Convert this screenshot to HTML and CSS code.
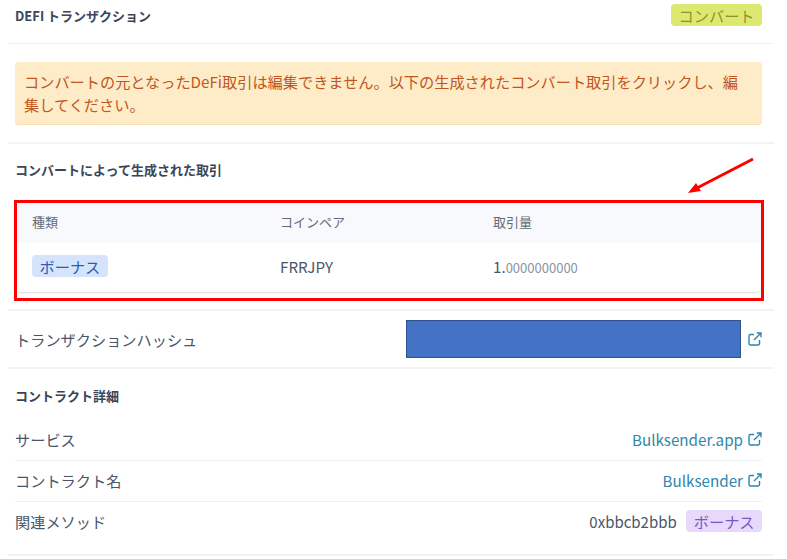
FILE: index.html
```html
<!DOCTYPE html>
<html lang="ja">
<head>
<meta charset="utf-8">
<title>DEFI トランザクション</title>
<link rel="stylesheet" href="styles.css">
</head>
<body>
<main class="panel">
  <header class="head">
    <h2 class="title">DEFI トランザクション</h2>
    <span class="badge badge-lime">コンバート</span>
  </header>
  <section class="alert-wrap">
    <p class="alert">コンバートの元となったDeFi取引は編集できません。以下の生成されたコンバート取引をクリックし、編集してください。</p>
  </section>
  <section class="generated">
    <h3 class="title sub">コンバートによって生成された取引</h3>
    <div class="table">
      <div class="tr th">
        <span>種類</span><span>コインペア</span><span>取引量</span>
      </div>
      <div class="tr td">
        <span><span class="badge badge-blue">ボーナス</span></span>
        <span>FRRJPY</span>
        <span>1.<small class="dec">0000000000</small></span>
      </div>
    </div>
  </section>
  <section class="hash">
    <span class="label">トランザクションハッシュ</span>
    <div class="hash-val">
      <div class="mask"></div>
      <a class="link"><svg class="ext" viewBox="0 0 14 14"><path d="M11.5 8v3.6a1.4 1.4 0 0 1-1.4 1.4H2.4A1.4 1.4 0 0 1 1 11.6V3.9a1.4 1.4 0 0 1 1.4-1.4H6M8.8 1H13v4.2M13 1 6 8"/></svg></a>
    </div>
  </section>
  <section class="contract">
    <h3 class="title sub2">コントラクト詳細</h3>
    <div class="row">
      <span class="label">サービス</span>
      <a class="link">Bulksender.app<svg class="ext" viewBox="0 0 14 14"><path d="M11.5 8v3.6a1.4 1.4 0 0 1-1.4 1.4H2.4A1.4 1.4 0 0 1 1 11.6V3.9a1.4 1.4 0 0 1 1.4-1.4H6M8.8 1H13v4.2M13 1 6 8"/></svg></a>
    </div>
    <div class="row">
      <span class="label">コントラクト名</span>
      <a class="link">Bulksender<svg class="ext" viewBox="0 0 14 14"><path d="M11.5 8v3.6a1.4 1.4 0 0 1-1.4 1.4H2.4A1.4 1.4 0 0 1 1 11.6V3.9a1.4 1.4 0 0 1 1.4-1.4H6M8.8 1H13v4.2M13 1 6 8"/></svg></a>
    </div>
    <div class="row last">
      <span class="label">関連メソッド</span>
      <span class="method">0xbbcb2bbb<span class="badge badge-purple">ボーナス</span></span>
    </div>
  </section>
</main>
<div class="red-box"></div>
<svg class="arrow" viewBox="0 0 70 40"><path class="arrow-line" d="M66 3 10 32"/><path class="arrow-head" d="M1 37 9 27 14 35Z"/></svg>
</body>
</html>
```
FILE: styles.css
```css
* { box-sizing: border-box; }
html, body { margin: 0; padding: 0; background: #fff; }
body {
  width: 787px;
  height: 559px;
  overflow: hidden;
  position: relative;
  font-family: "Noto Sans CJK JP", "Noto Sans", sans-serif;
  color: #4a5568;
}
.panel { margin-left: 8px; width: 766px; }
.head {
  height: 44px;
  padding: 4px 12px 0 7px;
  border-bottom: 1px solid #edf2f7;
  display: flex;
  justify-content: space-between;
  align-items: flex-start;
}
.title {
  margin: 0;
  font-size: 13px;
  line-height: 24px;
  font-weight: 700;
  color: #3a4658;
}
.badge {
  display: inline-block;
  height: 22px;
  padding: 0 7.5px;
  border-radius: 4px;
  font-size: 15.2px;
  line-height: 22px;
}
.badge-lime { background: #dde871; color: #8f932a; }
.badge-blue { background: #d5e3fb; color: #2b5cb8; }
.badge-purple { background: #e6d9fb; color: #7c55c7; }
.alert-wrap {
  height: 100px;
  padding: 18px 12px 0 7px;
  border-bottom: 2px solid #f1f3f6;
}
.alert {
  margin: 0;
  height: 63px;
  padding: 8px 9px 0 9px;
  background: #feebc8;
  border-bottom: 1px solid #f6dcae;
  border-radius: 4px;
  color: #c05621;
  font-size: 15.2px;
  line-height: 22.8px;
}
.generated {
  height: 167px;
  padding: 14px 12px 0 7px;
  border-bottom: 2px solid #f1f3f6;
}
.table {
  margin-top: 21px;
  border-radius: 0 0 6px 6px;
  box-shadow: 0 1px 2px rgba(0, 0, 0, .14);
  font-size: 15.2px;
}
.tr {
  display: grid;
  grid-template-columns: 248px 213px 1fr;
  padding-left: 17px;
  align-items: center;
}
.th { height: 40px; padding-bottom: 4px; background: #f7f9fd; font-size: 13px; color: #656b75; }
.td { height: 49px; padding-bottom: 3px; color: #4a5568; }
.dec { font-size: 13px; color: #8a94a3; }
.hash {
  height: 58px;
  padding: 0 12px 0 7px;
  border-bottom: 2px solid #f1f3f6;
  display: flex;
  justify-content: space-between;
  align-items: center;
}
.label { font-size: 15.2px; color: #4a5568; }
.hash-val { display: flex; align-items: center; gap: 7px; }
.mask { width: 335px; height: 38px; background: #4472c4; border: 1px solid #2f528f; }
.link { display: inline-flex; align-items: center; gap: 5px; font-size: 15.2px; color: #2f86ab; }
.ext { width: 14px; height: 14px; fill: none; stroke: #2f86ab; stroke-width: 1.4; }
.contract { padding: 0 12px 0 7px; height: 187px; border-bottom: 2px solid #f1f3f6; }
.sub2 { padding-top: 15px; line-height: 24px; height: 51px; }
.row {
  height: 41px;
  padding-bottom: 2px;
  display: flex;
  justify-content: space-between;
  align-items: center;
  border-bottom: 1px solid #edf2f7;
}
.row.last { border-bottom: 0; padding-bottom: 3px; }
.method { display: inline-flex; align-items: center; gap: 9.5px; font-size: 15px; color: #4a5568; }
.red-box {
  position: absolute;
  left: 14px;
  top: 200px;
  width: 750px;
  height: 101px;
  border: 3px solid #f00;
}
.arrow { position: absolute; left: 687px; top: 156px; width: 70px; height: 40px; }
.arrow-line { stroke: #f00; stroke-width: 3; fill: none; }
.arrow-head { fill: #f00; }
```
